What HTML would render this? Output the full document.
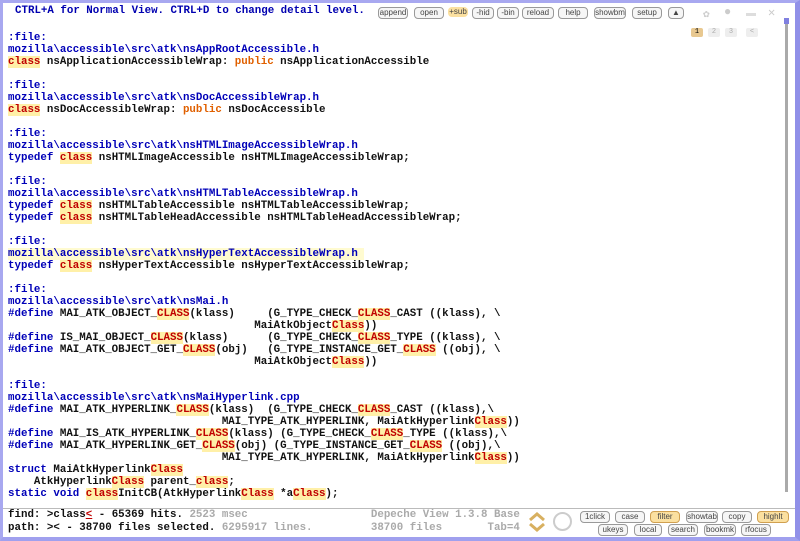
<!DOCTYPE html>
<html><head><style>
body{margin:0;width:800px;height:541px;overflow:hidden;background:#fff;font-family:"Liberation Mono",monospace;}
#frame{position:absolute;left:0;top:0;width:800px;height:541px;box-sizing:border-box;border:3px solid #a8a8f0;border-right:5px solid #9090e8;border-bottom:4px solid #a0a0ee;}
#hdr{position:absolute;left:15px;top:5px;font-size:10.8px;font-weight:bold;color:#0000b0;white-space:pre;}
.b{position:absolute;top:7px;height:10px;border:1px solid #999;border-radius:4px;font-size:8px;line-height:10px;color:#444;font-family:"Liberation Sans",sans-serif;text-align:center;background:#f6f6f6}
pre{position:absolute;left:8px;top:32px;margin:0;font-size:10.8px;line-height:12px;font-weight:bold;color:#111;font-family:"Liberation Mono",monospace;}
.k{color:#0000b8}.c{color:#c00000;background:#fff0a8}.p{color:#e06000}
.hl{background:#fffbd0}
#sb{position:absolute;left:785px;top:22px;width:3px;height:470px;background:#aaa}
#sbt{position:absolute;left:784px;top:18px;width:5px;height:6px;background:#8080e0}
#sep{position:absolute;left:3px;top:508px;width:792px;height:1px;background:#bbb}
#st{position:absolute;left:8px;top:509px;font-size:10.8px;line-height:13px;font-weight:bold;color:#111;white-space:pre;}
.g{color:#aaa}
.sb2{position:absolute;height:10px;border:1px solid #999;border-radius:4px;font-size:8px;line-height:10px;color:#444;font-family:"Liberation Sans",sans-serif;text-align:center;background:#f6f6f6}
.y{background:#fbe0a0;border-color:#d0a050}
</style></head><body>
<div id="frame"></div>
<div id="hdr">CTRL+A for Normal View. CTRL+D to change detail level.</div>
<div class="b" style="left:378px;width:28px">append</div>
<div class="b" style="left:414px;width:28px">open</div>
<div class="b y" style="left:448px;width:20px;border:none">+sub</div>
<div class="b" style="left:472px;width:20px">-hid</div>
<div class="b" style="left:497px;width:20px">-bin</div>
<div class="b" style="left:522px;width:30px">reload</div>
<div class="b" style="left:558px;width:28px">help</div>
<div class="b" style="left:594px;width:30px">showbm</div>
<div class="b" style="left:632px;width:28px">setup</div>
<div class="b" style="left:668px;width:14px">▲</div>
<div style="position:absolute;left:703px;top:7px;color:#ccc;font-size:11px">✿</div>
<div style="position:absolute;left:724px;top:5px;color:#ccc;font-size:12px">●</div>
<div style="position:absolute;left:746px;top:13px;width:10px;height:3px;background:#ddd"></div>
<div style="position:absolute;left:768px;top:5px;color:#ccc;font-size:12px">✕</div>
<div style="position:absolute;left:691px;top:28px;width:12px;height:9px;background:#e8c890;border-radius:2px;font-size:7px;text-align:center;line-height:9px">1</div>
<div style="position:absolute;left:708px;top:28px;width:12px;height:9px;background:#eee;border-radius:2px;font-size:7px;text-align:center;color:#aaa;line-height:9px">2</div>
<div style="position:absolute;left:725px;top:28px;width:12px;height:9px;background:#eee;border-radius:2px;font-size:7px;text-align:center;color:#aaa;line-height:9px">3</div>
<div style="position:absolute;left:746px;top:28px;width:12px;height:9px;background:#eee;border-radius:2px;font-size:7px;text-align:center;color:#aaa;line-height:9px">&lt;</div>
<div id="sb"></div><div id="sbt"></div>
<pre><span class="k">:file:</span>
<span class="k">mozilla\accessible\src\atk\nsAppRootAccessible.h</span>
<span class="c">class</span> nsApplicationAccessibleWrap: <span class="p">public</span> nsApplicationAccessible

<span class="k">:file:</span>
<span class="k">mozilla\accessible\src\atk\nsDocAccessibleWrap.h</span>
<span class="c">class</span> nsDocAccessibleWrap: <span class="p">public</span> nsDocAccessible

<span class="k">:file:</span>
<span class="k">mozilla\accessible\src\atk\nsHTMLImageAccessibleWrap.h</span>
<span class="k">typedef</span> <span class="c">class</span> nsHTMLImageAccessible nsHTMLImageAccessibleWrap;

<span class="k">:file:</span>
<span class="k">mozilla\accessible\src\atk\nsHTMLTableAccessibleWrap.h</span>
<span class="k">typedef</span> <span class="c">class</span> nsHTMLTableAccessible nsHTMLTableAccessibleWrap;
<span class="k">typedef</span> <span class="c">class</span> nsHTMLTableHeadAccessible nsHTMLTableHeadAccessibleWrap;

<span class="k">:file:</span>
<span class="k hl">mozilla\accessible\src\atk\nsHyperTextAccessibleWrap.h </span>
<span class="k">typedef</span> <span class="c">class</span> nsHyperTextAccessible nsHyperTextAccessibleWrap;

<span class="k">:file:</span>
<span class="k">mozilla\accessible\src\atk\nsMai.h</span>
<span class="k">#define</span> MAI_ATK_OBJECT_<span class="c">CLASS</span>(klass)     (G_TYPE_CHECK_<span class="c">CLASS</span>_CAST ((klass), \
                                      MaiAtkObject<span class="c">Class</span>))
<span class="k">#define</span> IS_MAI_OBJECT_<span class="c">CLASS</span>(klass)      (G_TYPE_CHECK_<span class="c">CLASS</span>_TYPE ((klass), \
<span class="k">#define</span> MAI_ATK_OBJECT_GET_<span class="c">CLASS</span>(obj)   (G_TYPE_INSTANCE_GET_<span class="c">CLASS</span> ((obj), \
                                      MaiAtkObject<span class="c">Class</span>))

<span class="k">:file:</span>
<span class="k">mozilla\accessible\src\atk\nsMaiHyperlink.cpp</span>
<span class="k">#define</span> MAI_ATK_HYPERLINK_<span class="c">CLASS</span>(klass)  (G_TYPE_CHECK_<span class="c">CLASS</span>_CAST ((klass),\
                                 MAI_TYPE_ATK_HYPERLINK, MaiAtkHyperlink<span class="c">Class</span>))
<span class="k">#define</span> MAI_IS_ATK_HYPERLINK_<span class="c">CLASS</span>(klass) (G_TYPE_CHECK_<span class="c">CLASS</span>_TYPE ((klass),\
<span class="k">#define</span> MAI_ATK_HYPERLINK_GET_<span class="c">CLASS</span>(obj) (G_TYPE_INSTANCE_GET_<span class="c">CLASS</span> ((obj),\
                                 MAI_TYPE_ATK_HYPERLINK, MaiAtkHyperlink<span class="c">Class</span>))
<span class="k">struct</span> MaiAtkHyperlink<span class="c">Class</span>
    AtkHyperlink<span class="c">Class</span> parent_<span class="c">class</span>;
<span class="k">static void</span> <span class="c">class</span>InitCB(AtkHyperlink<span class="c">Class</span> *a<span class="c">Class</span>);</pre>
<div id="sep"></div>
<div id="st">find: &gt;class<span style="color:#c00000;text-decoration:underline">&lt;</span> - 65369 hits. <span class="g">2523 msec                   Depeche View 1.3.8 Base</span>
path: &gt;&lt; - 38700 files selected. <span class="g">6295917 lines.         38700 files       Tab=4</span></div>
<svg style="position:absolute;left:527px;top:511px" width="20" height="22" viewBox="0 0 20 22"><path d="M3 9 L10 3 L17 9" fill="none" stroke="#d8b060" stroke-width="3"/><path d="M3 13 L10 19 L17 13" fill="none" stroke="#d8b060" stroke-width="3"/></svg>
<div style="position:absolute;left:553px;top:512px;width:15px;height:15px;border:2px solid #ccc;border-radius:50%"></div>
<div class="sb2" style="left:580px;top:511px;width:28px">1click</div>
<div class="sb2" style="left:615px;top:511px;width:28px">case</div>
<div class="sb2 y" style="left:650px;top:511px;width:28px">filter</div>
<div class="sb2" style="left:686px;top:511px;width:30px">showtab</div>
<div class="sb2" style="left:722px;top:511px;width:28px">copy</div>
<div class="sb2 y" style="left:757px;top:511px;width:30px">highlt</div>
<div class="sb2" style="left:598px;top:524px;width:28px">ukeys</div>
<div class="sb2" style="left:634px;top:524px;width:26px">local</div>
<div class="sb2" style="left:668px;top:524px;width:28px">search</div>
<div class="sb2" style="left:704px;top:524px;width:30px">bookmk</div>
<div class="sb2" style="left:741px;top:524px;width:28px">rfocus</div>
</body></html>
